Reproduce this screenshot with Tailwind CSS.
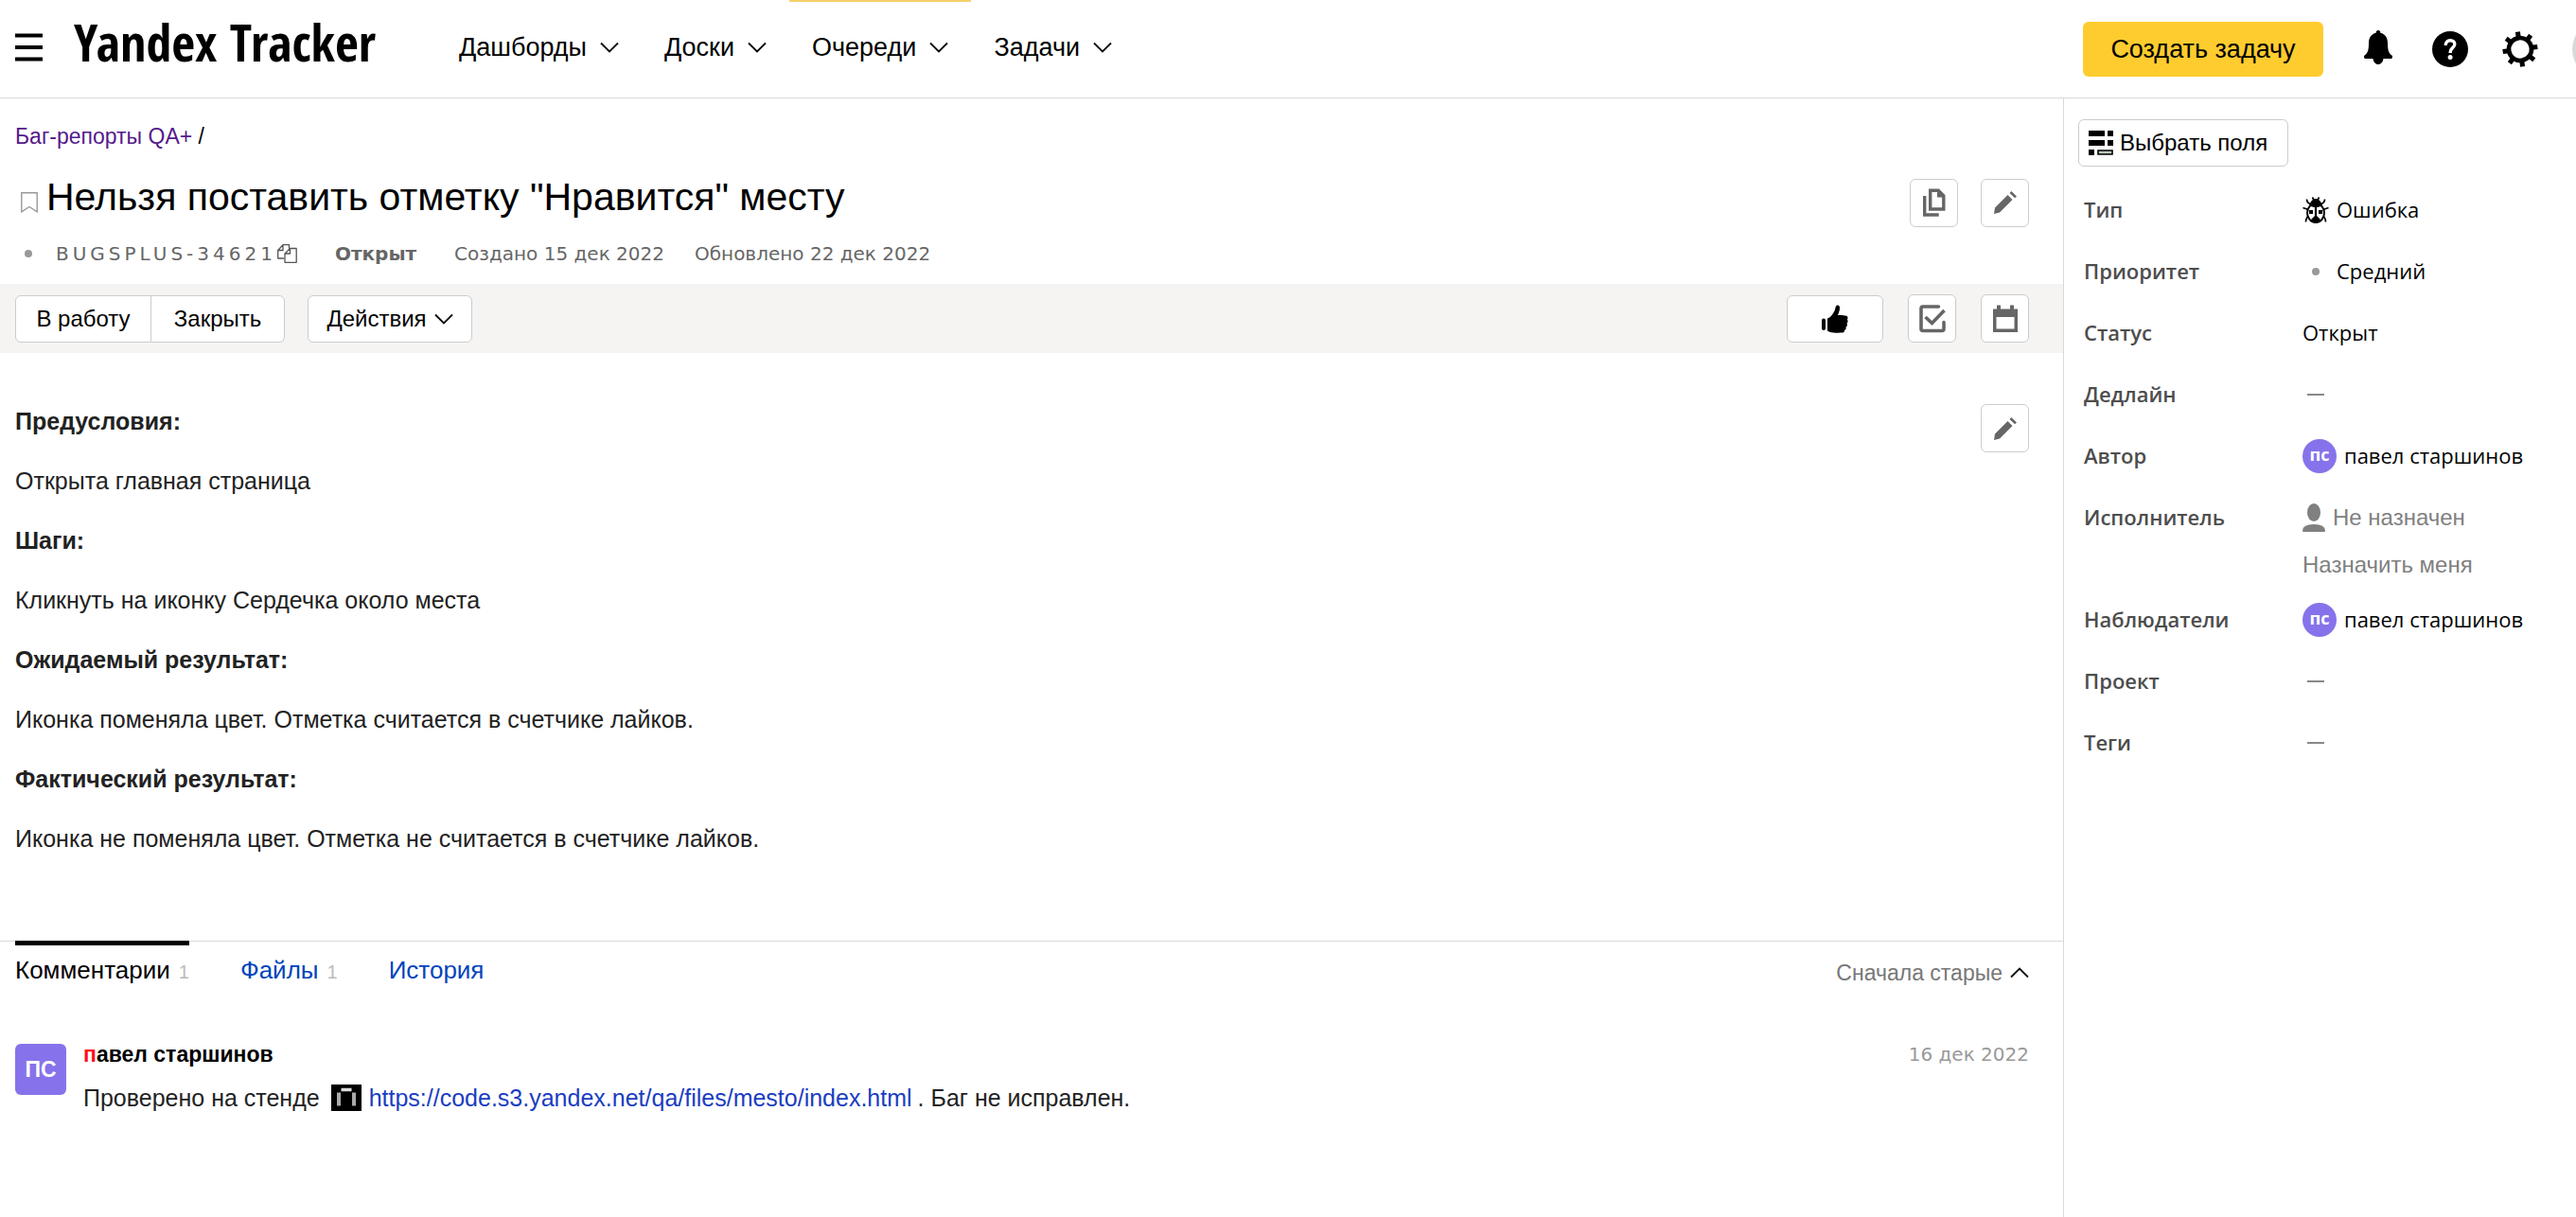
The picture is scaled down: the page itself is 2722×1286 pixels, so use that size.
<!DOCTYPE html>
<html lang="ru">
<head>
<meta charset="utf-8">
<meta name="viewport" content="width=device-width, initial-scale=1">
<title>BUGSPLUS-34621 — Yandex Tracker</title>
<script src="https://cdn.jsdelivr.net/npm/@tailwindcss/browser@4"></script>
</head>
<body class="min-h-screen flex flex-col overflow-x-hidden bg-white text-black font-['Liberation_Sans',Arial,sans-serif]">

<!-- Icons shared by several controls -->
<svg class="hidden" aria-hidden="true">
  <symbol id="chevron" viewBox="0 0 20 12"><path d="M1 1.500l9 9 9-9" fill="none" stroke="currentColor" stroke-width="1.800"/></symbol>
  <symbol id="pencil" viewBox="0 0 24 24"><path d="M0 24l1-6.500L14.500 4l5 5L6 22.500zM16.500 2l1.800-2 5.700 5.500-2 1.800z" fill="currentColor"/></symbol>
</svg>

<header class="h-[104px] shrink-0 flex items-center pl-4 border-b border-[#d9d9d9]">
  <button type="button" aria-label="Меню" class="shrink-0 pb-1">
    <svg class="block w-[30px] h-[30px]" viewBox="0 0 30 30" aria-hidden="true"><path d="M0 2.500h29M0 15h29M0 27.500h29" stroke="#000" stroke-width="4"/></svg>
  </button>
  <a href="#" class="ml-8 pb-4 shrink-0 text-[54px] leading-[60px] font-bold font-['Open_Sans_Condensed','Roboto_Condensed','Open_Sans',sans-serif]">Yandex Tracker</a>
  <nav class="ml-16 h-full flex text-[27px] leading-8" aria-label="Основное меню">
    <a href="#" class="px-6 flex items-center gap-[14px] border-t-2 border-transparent pb-[6px]">Дашборды <svg class="w-5 h-3" aria-hidden="true"><use href="#chevron"/></svg></a>
    <a href="#" class="px-6 flex items-center gap-[14px] border-t-2 border-transparent pb-[6px]">Доски <svg class="w-5 h-3" aria-hidden="true"><use href="#chevron"/></svg></a>
    <a href="#" aria-current="page" class="px-6 flex items-center gap-[14px] border-t-2 border-[#f5cf6b] pb-[6px]">Очереди <svg class="w-5 h-3" aria-hidden="true"><use href="#chevron"/></svg></a>
    <a href="#" class="px-6 flex items-center gap-[14px] border-t-2 border-transparent pb-[6px]">Задачи <svg class="w-5 h-3" aria-hidden="true"><use href="#chevron"/></svg></a>
  </nav>
  <div class="ml-auto shrink-0 flex items-center">
    <button type="button" class="w-[254px] h-[58px] rounded-md bg-[#ffcc2f] text-[27px] leading-8">Создать задачу</button>
    <button type="button" aria-label="Уведомления" class="ml-[43px] pb-1">
      <svg class="block w-[30px] h-9" viewBox="0 0 30 36" aria-hidden="true"><path d="M15 0c1.500 0 2.300 1 2.300 2.800C22.500 4 25 8 25 13.500c0 7 1 11 4.500 13 1 .800.600 3.500-.800 3.500h-8.200c-.500 3.500-2.500 6-5.500 6s-5-2.500-5.500-6H1.300C-.100 30-.500 27.300.500 26.500 4 24.500 5 20.500 5 13.500 5 8 7.500 4 12.700 2.800 12.700 1 13.500 0 15 0z"/></svg>
    </button>
    <button type="button" aria-label="Справка" class="ml-[42px] size-[38px] rounded-full bg-black">
      <svg class="block size-[38px]" viewBox="0 0 38 38" aria-hidden="true"><path d="M14.200 15c0-3.200 2-5.300 5-5.300 2.800 0 4.600 1.700 4.600 4 0 3.800-4.600 3.900-4.600 8.300v1" fill="none" stroke="#fff" stroke-width="3.400"/><circle cx="19.100" cy="27.600" r="2.500" fill="#fff"/></svg>
    </button>
    <button type="button" aria-label="Настройки" class="ml-9">
      <svg class="block size-[38px]" viewBox="-19 -19 38 38" aria-hidden="true"><g transform="rotate(-8)"><circle r="12" fill="none" stroke="#000" stroke-width="4.600"/><path d="M0-12v-6.500M0 12v6.500M12 0h6.500M-12 0h-6.500M8.500-8.500l4.600-4.600M-8.500 8.500l-4.600 4.600M8.500 8.500l4.600 4.600M-8.500-8.500l-4.600-4.600" stroke="#000" stroke-width="5"/></g></svg>
    </button>
    <button type="button" aria-label="Профиль" class="ml-9 -mr-[58px] size-[62px] rounded-full bg-[#d9d9d9]"></button>
  </div>
</header>

<div class="flex-1 flex">
  <main class="flex-1 min-w-0">
    <p class="pt-6 pl-4 text-[23px] leading-8"><a href="#" class="text-[#551a8b]">Баг-репорты QA+</a> /</p>

    <div class="mt-7 pl-[22px] pr-9 flex items-center">
      <button type="button" aria-label="В избранное" class="shrink-0"><svg class="block w-[18px] h-[22px]" viewBox="0 0 18 22" aria-hidden="true"><path d="M.800.800h16.400v20L9 15.500l-8.200 5.300z" fill="none" stroke="#999" stroke-width="1.400"/></svg></button>
      <h1 class="ml-[9px] flex-1 pb-3 text-[41px] leading-10">Нельзя поставить отметку "Нравится" месту</h1>
      <button type="button" aria-label="Клонировать" class="ml-6 size-[51px] rounded-md border border-[#ccc] bg-white text-[#666] flex items-center justify-center">
        <svg class="w-6 h-[30px]" viewBox="0 0 24 30" fill="none" stroke="currentColor" aria-hidden="true"><path d="M1.700 8v20h15" stroke-width="3.400"/><path d="M7.700 2.200h8.500l5.600 5.800v14H7.700z" stroke-width="3.400"/><path d="M15 1v8.500h8z" fill="currentColor" stroke="none"/></svg>
      </button>
      <button type="button" aria-label="Редактировать" class="ml-6 size-[51px] rounded-md border border-[#ccc] bg-white text-[#666] flex items-center justify-center"><svg class="size-6" aria-hidden="true"><use href="#pencil"/></svg></button>
    </div>

    <div class="mt-[14px] pl-[26px] flex items-center text-[20px] leading-7 text-[#666] font-['DejaVu_Sans',Verdana,sans-serif]">
      <span class="size-2 rounded-full bg-[#999]"></span>
      <span class="ml-[25px] tracking-[4px]">BUGSPLUS-34621</span>
      <button type="button" aria-label="Скопировать ключ" class="ml-px"><svg class="block w-[21px] h-5" viewBox="0 0 21 20" fill="none" stroke="#555" stroke-width="1.300" stroke-linejoin="round" aria-hidden="true"><path d="M7 15H.700V6.500L6 .700h6.500v4M6 .700v5.800H.700"/><path d="M8 10l5.500-5.500h6.700v14.800H8zM13.500 4.500V10H8"/></svg></button>
      <b class="ml-10">Открыт</b>
      <span class="ml-10">Создано 15 дек 2022</span>
      <span class="ml-8">Обновлено 22 дек 2022</span>
    </div>

    <div class="mt-[18px] h-[73px] pl-4 pr-9 flex items-center bg-[#f5f4f2] text-[24px] leading-8">
      <div class="flex">
        <button type="button" class="w-36 h-[50px] rounded-l-md border border-[#ccc] bg-white">В работу</button>
        <button type="button" class="-ml-px w-[142px] h-[50px] rounded-r-md border border-[#ccc] bg-white">Закрыть</button>
      </div>
      <button type="button" class="ml-6 w-[174px] h-[50px] rounded-md border border-[#ccc] bg-white flex items-center justify-center gap-2">Действия <svg class="w-5 h-3" aria-hidden="true"><use href="#chevron"/></svg></button>
      <button type="button" aria-label="Нравится" class="ml-auto w-[102px] h-[50px] rounded-md border border-[#ccc] bg-white flex items-center justify-center">
        <svg class="w-7 h-[30px]" viewBox="0 0 28 30" aria-hidden="true"><rect y="14.500" width="4" height="12.500" rx="2"/><path d="M6 14.500c3-1 5.500-4 7.500-8C14.800 4 14.200.500 16.800.500c3 0 2.900 4.500.200 10.500 3-.200 6.500 0 9 .800 1.800.700 2 2.700.900 3.700 1 1.200.900 3.200-.400 4.200.800 1.300.400 3.200-1 3.800.600 1.500-.100 3-1.500 3.500.100 1.700-.900 2.500-2.700 2.600-4.500.200-10 .100-13-.900-1.500-.500-2-1-2.300-1.200z"/></svg>
      </button>
      <button type="button" aria-label="Чек-лист" class="ml-[26px] size-[51px] rounded-md border border-[#ccc] bg-white text-[#666] flex items-center justify-center">
        <svg class="w-7 h-[30px]" viewBox="0 0 28 30" fill="none" stroke="currentColor" aria-hidden="true"><path d="M20.500 2H4Q2 2 2 4v21.500q0 2 2 2h20q2 0 2-2v-7" stroke-width="3.600" stroke-linecap="round"/><path d="M6.500 13l7 6.500L26.500 6" stroke-width="3.600"/></svg>
      </button>
      <button type="button" aria-label="Дедлайн" class="ml-[26px] size-[51px] rounded-md border border-[#ccc] bg-white text-[#666] flex items-center justify-center">
        <svg class="w-[26px] h-[30px]" viewBox="0 0 26 30" fill="currentColor" aria-hidden="true"><path fill-rule="evenodd" d="M0 4.500h4V.500h4v4h10v-4h4v4h4V29H0zM3.500 13v12.500h19V13z"/></svg>
      </button>
    </div>

    <section class="pt-[54px] pl-4 pr-9 flex items-start" aria-label="Описание">
      <div class="flex-1 pt-[2px] flex flex-col gap-[31px] text-[25px] leading-8 text-[#222]">
        <p class="font-bold">Предусловия:</p>
        <p>Открыта главная страница</p>
        <p class="font-bold">Шаги:</p>
        <p>Кликнуть на иконку Сердечка около места</p>
        <p class="font-bold">Ожидаемый результат:</p>
        <p>Иконка поменяла цвет. Отметка считается в счетчике лайков.</p>
        <p class="font-bold">Фактический результат:</p>
        <p>Иконка не поменяла цвет. Отметка не считается в счетчике лайков.</p>
      </div>
      <button type="button" aria-label="Редактировать описание" class="size-[51px] rounded-md border border-[#ccc] bg-white text-[#666] flex items-center justify-center"><svg class="size-6" aria-hidden="true"><use href="#pencil"/></svg></button>
    </section>

    <div class="mt-[92px] pl-4 pr-9 flex items-start border-t border-[#d9d9d9] text-[26px] leading-8">
      <nav class="-mt-px flex gap-[54px] text-[#04b]" aria-label="Вкладки">
        <a href="#" aria-current="page" class="pt-[10px] flex items-baseline gap-[9px] border-t-[5px] border-black text-black">Комментарии <span class="text-[20px] text-[#bbb]">1</span></a>
        <a href="#" class="pt-[10px] flex items-baseline gap-[9px] border-t-[5px] border-transparent">Файлы <span class="text-[20px] text-[#bbb]">1</span></a>
        <a href="#" class="pt-[10px] border-t-[5px] border-transparent">История</a>
      </nav>
      <button type="button" class="ml-auto mt-[17px] flex items-center gap-2 text-[23px] leading-8 text-[#777]">Сначала старые <svg class="w-5 h-3 rotate-180 text-black" aria-hidden="true"><use href="#chevron"/></svg></button>
    </div>

    <article class="mt-[56px] pl-4 pr-9 pb-8 flex items-start">
      <div class="mt-[3px] size-[54px] shrink-0 rounded-md bg-[#8673eb] text-white text-[23px] leading-8 font-bold flex items-center justify-center" aria-hidden="true">ПС</div>
      <div class="ml-[18px] flex-1">
        <div class="flex justify-between text-[23px] leading-7">
          <a href="#" class="font-bold"><span class="text-[#ff0c1c]">п</span>авел старшинов</a>
          <time datetime="2022-12-16" class="text-[20px] text-[#999] font-['DejaVu_Sans',Verdana,sans-serif]">16 дек 2022</time>
        </div>
        <p class="mt-4 flex items-center text-[25px] leading-8 text-[#222]">Проверено на стенде
          <svg class="ml-3 w-8 h-7 shrink-0" viewBox="0 0 32 28" aria-hidden="true"><path d="M0 0h32v28H0z"/><path d="M8 8.500v14M24 8.500v14" stroke="#aaa" stroke-width="4"/><path d="M10.500 5.500h11" stroke="#ddd" stroke-width="3.500"/></svg>
          <a href="#" class="ml-2 text-[#1a3dc1]">https://code.s3.yandex.net/qa/files/mesto/index.html</a><span class="ml-[6px]">. Баг не исправлен.</span>
        </p>
      </div>
    </article>
  </main>

  <aside class="w-[542px] shrink-0 border-l border-[#d9d9d9] pt-[22px] pl-[15px] font-['Open_Sans','Noto_Sans',sans-serif]">
    <button type="button" class="w-[222px] h-[50px] pl-[10px] rounded-md border border-[#ccc] bg-white flex items-center gap-[7px] text-[24px] leading-8 font-['Liberation_Sans',Arial,sans-serif]">
      <svg class="size-[26px]" viewBox="0 0 26 26" aria-hidden="true"><path d="M0 0h17v6H0zM20 0h6v6h-6zM0 10h17v6H0zM20 10h6v6h-6zM0 20h6v6H0z"/><path d="M10 21h15v4H10z" fill="#bcb" stroke="#000" stroke-width="1.600"/></svg>
      Выбрать поля
    </button>
    <dl class="mt-[13px] pl-[6px] grid grid-cols-[231px_1fr] auto-rows-[minmax(65px,auto)] text-[22px] leading-[65px]">
      <dt class="font-semibold text-[#4d4d4d]">Тип</dt>
      <dd class="flex items-center gap-2">
        <svg class="w-7 h-7" viewBox="0 0 28 28" aria-hidden="true"><path d="M4.500 2.500Q4.500 6 8 7.500M23.500 2.500Q23.500 6 20 7.500M.500 11.500L6 13.500M27.500 11.500L22 13.500M3.500 26.500Q3.500 22 7 20M24.500 26.500Q24.500 22 21 20M10.500.500l1.500 3M17.500.500l-1.500 3" fill="none" stroke="#000" stroke-width="1.700"/><ellipse cx="14" cy="17" rx="9" ry="10" fill="#fff" stroke="#000" stroke-width="2"/><path d="M7 9.500Q9 2 14 2t7 7.500l-5 1.500h-4zM12.900 9h2.200v14h-2.200zM9 24l4-4h2l4 4q-2 4-5 4t-5-4zM7 14h4v4H7zM21 14h-4v4h4z"/></svg>
        Ошибка
      </dd>
      <dt class="font-semibold text-[#4d4d4d]">Приоритет</dt>
      <dd class="flex items-center gap-2"><span class="w-7 flex justify-center"><span class="size-2 rounded-full bg-[#999]"></span></span>Средний</dd>
      <dt class="font-semibold text-[#4d4d4d]">Статус</dt>
      <dd>Открыт</dd>
      <dt class="font-semibold text-[#4d4d4d]">Дедлайн</dt>
      <dd class="pl-[5px] flex items-center"><span class="w-[18px] h-[2px] bg-[#888]" role="img" aria-label="Не задан"></span></dd>
      <dt class="font-semibold text-[#4d4d4d]">Автор</dt>
      <dd class="flex items-center gap-2"><span class="size-9 rounded-full bg-[#8673eb] text-white text-[18px] leading-8 font-bold text-center" aria-hidden="true">пс</span><a href="#">павел старшинов</a></dd>
      <dt class="font-semibold text-[#4d4d4d]">Исполнитель</dt>
      <dd class="pb-[9px] font-['Liberation_Sans',Arial,sans-serif] text-[24px] text-[#808080]">
        <div class="flex items-center gap-2"><svg class="w-6 h-[30px]" viewBox="0 0 24 30" fill="#808080" aria-hidden="true"><ellipse cx="12" cy="9.500" rx="7" ry="9.500"/><path d="M0 29q0-7 12-7t12 7q0 1-1 1H1q-1 0-1-1z"/></svg>Не назначен</div>
        <button type="button" class="block pt-[2px] leading-8">Назначить меня</button>
      </dd>
      <dt class="font-semibold text-[#4d4d4d]">Наблюдатели</dt>
      <dd class="flex items-center gap-2"><span class="size-9 rounded-full bg-[#8673eb] text-white text-[18px] leading-8 font-bold text-center" aria-hidden="true">пс</span><a href="#">павел старшинов</a></dd>
      <dt class="font-semibold text-[#4d4d4d]">Проект</dt>
      <dd class="pl-[5px] flex items-center"><span class="w-[18px] h-[2px] bg-[#888]" role="img" aria-label="Не задан"></span></dd>
      <dt class="font-semibold text-[#4d4d4d]">Теги</dt>
      <dd class="pl-[5px] flex items-center"><span class="w-[18px] h-[2px] bg-[#888]" role="img" aria-label="Не задан"></span></dd>
    </dl>
  </aside>
</div>
</body>
</html>
